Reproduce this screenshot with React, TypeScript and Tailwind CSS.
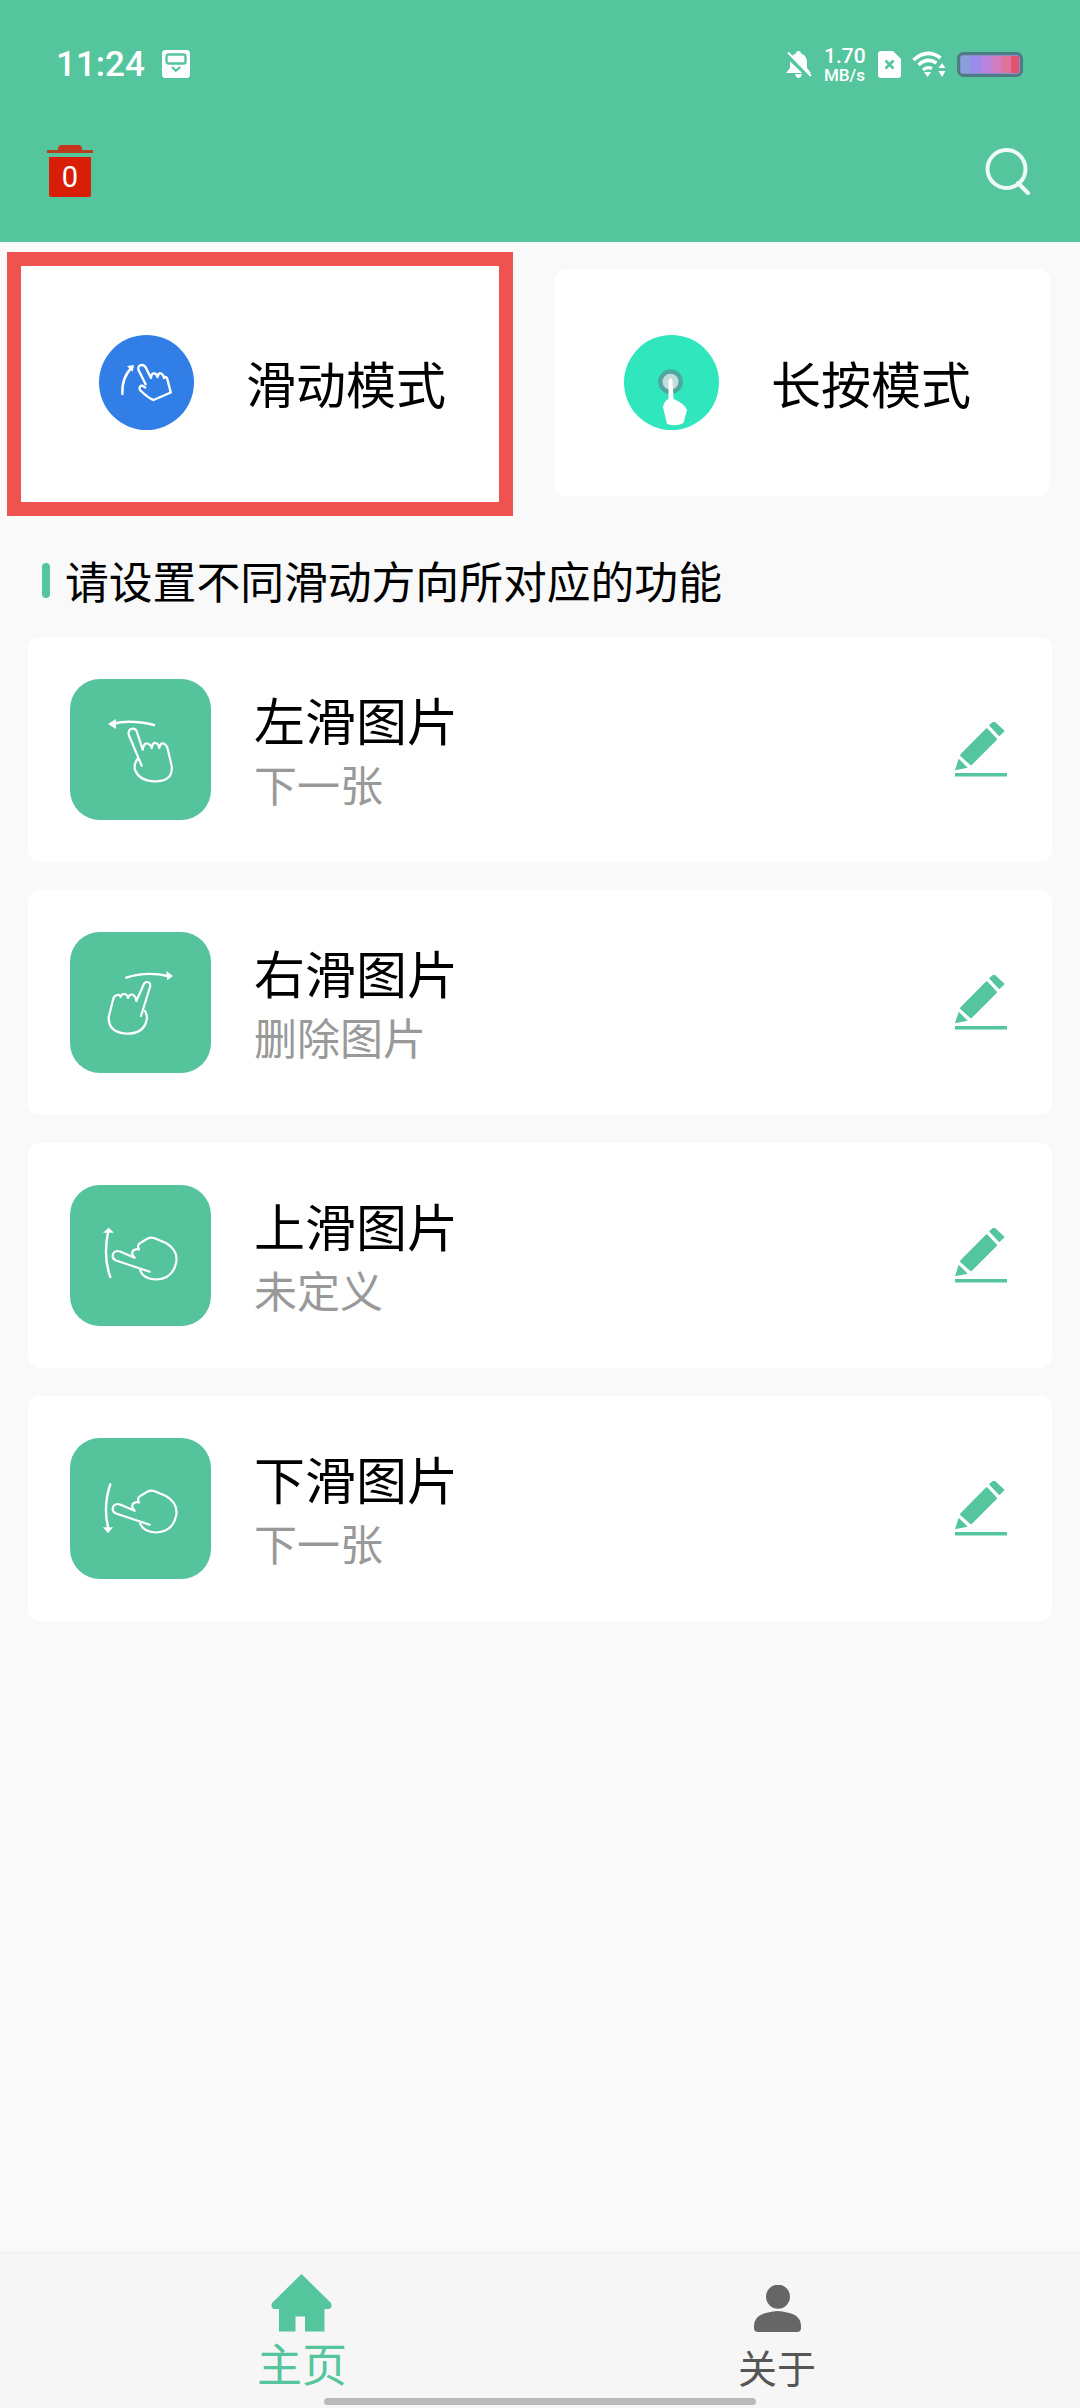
import type { ReactNode } from "react";

const handLeft =
  "M71.7 86.7 L58.7 55.7 Q58 50 62.5 49.7 Q65.5 49.5 66.7 52.3 L72.7 70.7 Q74 64 77 64.5 Q80.5 65 81.7 69 Q82.5 63.5 85.5 64 Q88.5 64.5 89.3 69 Q90.5 63.5 93.5 64.5 Q97 66 97.7 70 L101.7 87 Q103 102 86.7 102.3 Q70 103 65 91 Q63.5 84 68.3 79";
const handRight =
  "M71 84 L80 55 Q81 50 77 50 Q74.5 50 73.5 53 L66.3 69 Q65.5 63 62 62.5 Q59 62.5 58 66 Q57 62 54 62 Q51.5 62 50.5 65 Q49.5 62 47 63 Q43.5 64 43 68 L38.7 85 Q38 100 56 101.7 Q75 102 77 86 Q77 82 75 79";
const handSide =
  "M79.7 86.7 L46 75.5 Q41 73 43.5 68 Q45.5 65 50 66.5 L64.7 72.7 Q60 68 64 65 Q67 63.5 69 64.5 Q66.5 59.5 71 57.5 L76 54.5 Q79 52 84 53 L96 58 Q108 65 106.3 77 Q103 94 86 94.5 Q73 94 70 85";

const rows = [
  {
    title: "左滑图片",
    sub: "下一张",
    hand: handLeft,
    arrow: "M84 46 Q60 40 42 45",
    head: "M38 45 L46 40 L46 50 Z",
  },
  {
    title: "右滑图片",
    sub: "删除图片",
    hand: handRight,
    arrow: "M56.3 45.7 Q76 39 98 44",
    head: "M103 44 L96.3 39 L97.3 48.3 Z",
  },
  {
    title: "上滑图片",
    sub: "未定义",
    hand: handSide,
    arrow: "M40.3 92 Q33 72.7 38 47",
    head: "M38.7 42.7 L33 47.7 L44 47.7 Z",
  },
  {
    title: "下滑图片",
    sub: "下一张",
    hand: handSide,
    arrow: "M40.3 46.3 Q33 68 38 89",
    head: "M38 95.3 L33 89.3 L43 89.3 Z",
  },
];

function PencilIcon() {
  return (
    <svg width="52" height="56" viewBox="0 0 52 56" fill="#55c59d">
      <path d="M0 48.3 L3.7 36.7 L12.7 45.7 Z" />
      <path
        d="M6 33.3 L31.7 7.3 L41 17.3 L16 42.3 Z"
        stroke="#55c59d"
        strokeWidth="2"
        strokeLinejoin="round"
      />
      <path
        d="M35 3.3 L39 0 L48.7 9 L44.3 13.3 Z"
        stroke="#55c59d"
        strokeWidth="1.5"
        strokeLinejoin="round"
      />
      <rect x="0" y="51" width="52" height="3.5" />
    </svg>
  );
}

function SwipeRow({ title, sub, hand, arrow, head }: (typeof rows)[number]) {
  return (
    <div className="flex h-[225px] items-center rounded-xl bg-white pl-[42px] pr-[45px]">
      <div className="h-[141px] w-[141px] shrink-0 rounded-[30px] bg-[#55c39b]">
        <svg width="141" height="141" viewBox="0 0 141 141" fill="none">
          <path d={arrow} stroke="white" strokeWidth="2.4" strokeLinecap="round" />
          <path d={head} fill="white" />
          <path
            d={hand}
            stroke="white"
            strokeWidth="2.2"
            strokeLinecap="round"
            strokeLinejoin="round"
          />
        </svg>
      </div>
      <div className="ml-[43px] flex flex-1 flex-col">
        <span className="text-[51px] leading-[60px] text-black">{title}</span>
        <span className="mt-[6px] text-[43px] leading-[56px] text-[#999999]">{sub}</span>
      </div>
      <PencilIcon />
    </div>
  );
}

function ModeCircle({ className, children }: { className: string; children: ReactNode }) {
  return <div className={`h-[95px] w-[95px] shrink-0 rounded-full ${className}`}>{children}</div>;
}

function StatusBar() {
  return (
    <div className="flex h-[34px] items-center justify-between pl-[56px] pr-[57px]">
      <div className="flex items-center gap-[17px]">
        <span className="font-['Roboto',sans-serif] text-[35px] font-medium leading-none text-white">
          11:24
        </span>
        <svg width="28" height="28" viewBox="0 0 28 28">
          <rect width="28" height="28" rx="3.5" fill="white" />
          <rect x="4.5" y="4.5" width="19" height="9" rx="2" fill="white" stroke="#55c59d" strokeWidth="2.4" />
          <path d="M10 17 L13.8 20.7 L18.3 17" fill="none" stroke="#55c59d" strokeWidth="2.2" />
        </svg>
      </div>
      <div className="flex items-center">
        <svg width="26" height="27" viewBox="0 0 26 27">
          <path d="M12.5 0 Q15 0 15 2.5 Q21 4.5 21 12 L21 17 L25 22 L0 22 L4 17 L4 12 Q4 4.5 10 2.5 Q10 0 12.5 0 Z M9 23 H16 Q15 27 12.5 27 Q10 27 9 23 Z" fill="white" />
          <path d="M0 3 L24 26" stroke="#55c59d" strokeWidth="5" />
          <path d="M2 1.5 L25 25" stroke="white" strokeWidth="2" />
        </svg>
        <div className="ml-[12px] flex w-[44px] flex-col font-['Roboto',sans-serif] font-medium text-white">
          <span className="text-[21px] leading-[21px]">1.70</span>
          <span className="text-[17px] leading-[16px]">MB/s</span>
        </div>
        <svg className="ml-[10px]" width="23" height="27" viewBox="0 0 23 27">
          <path d="M3 0 H15 L23 8 V24 Q23 27 20 27 H3 Q0 27 0 24 V3 Q0 0 3 0 Z" fill="white" />
          <path d="M7.5 9.5 L15.5 17.5 M15.5 9.5 L7.5 17.5" stroke="#55c59d" strokeWidth="2.6" />
        </svg>
        <svg className="ml-[11px]" width="35" height="26" viewBox="0 0 35 26" fill="none">
          <path d="M1.5 9 Q15 -3 28.5 7" stroke="white" strokeWidth="3.6" />
          <path d="M6.5 14 Q15 6 24.5 12" stroke="white" strokeWidth="3.6" />
          <path d="M11 19 Q15 15 20 17.5" stroke="white" strokeWidth="3.2" />
          <path d="M12 21 H19 L15.5 26 Z" fill="white" />
          <path d="M30 12 L33.5 17 H26.5 Z M30 26 L26.5 20 H33.5 Z" fill="white" />
        </svg>
        <svg className="ml-[10px]" width="66" height="25" viewBox="0 0 66 25">
          <rect x="1.5" y="1.5" width="63" height="22" rx="5" fill="#8a8fd0" stroke="#4e7a82" strokeWidth="3" />
          <rect x="4" y="4" width="9" height="17" fill="#8b9fdc" />
          <rect x="13" y="4" width="11" height="17" fill="#9a8cec" />
          <rect x="24" y="4" width="10" height="17" fill="#b884dc" />
          <rect x="34" y="4" width="10" height="17" fill="#d07ec4" />
          <rect x="44" y="4" width="10" height="17" fill="#dc749c" />
          <rect x="54" y="4" width="8" height="17" fill="#e0526e" />
        </svg>
      </div>
    </div>
  );
}

function Toolbar() {
  return (
    <div className="mt-[64px] flex items-start justify-between pl-[47px] pr-[49px]">
      <div className="flex w-[46px] flex-col items-center">
        <div className="h-[5px] w-[24px] rounded-t-[4px] bg-[#c9341c]" />
        <div className="h-[3px] w-[46px] bg-[#b5401f]" />
        <div className="mt-[4px] flex h-[40px] w-[42px] items-center justify-center rounded-b-[2px] bg-[#d81e06] font-['Roboto',sans-serif] text-[29px] leading-none text-white">
          0
        </div>
      </div>
      <svg className="mt-[3px]" width="46" height="47" viewBox="0 0 46 47" fill="none">
        <circle cx="21.5" cy="21" r="19" stroke="#eefaf5" strokeWidth="4" />
        <path d="M33 35 L43 45" stroke="#eefaf5" strokeWidth="4" strokeLinecap="round" />
      </svg>
    </div>
  );
}

export default function App() {
  return (
    <div className="flex h-[2408px] w-[1080px] flex-col overflow-hidden bg-[#f9f9f9] font-['Noto_Sans_CJK_SC','Noto_Sans',sans-serif]">
      <header className="h-[242px] shrink-0 bg-[#55c59d] pt-[47px]">
        <StatusBar />
        <Toolbar />
      </header>

      <main className="flex-1">
        {/* Mode cards */}
        <div className="ml-[7px] mt-[10px] flex items-start gap-[41px]">
          <div className="flex h-[264px] w-[506px] items-center border-[14px] border-[#ee5350] bg-white pl-[78px]">
            <ModeCircle className="mb-[3px] bg-[#317fe6]">
              <svg width="95" height="95" viewBox="0 0 95 95" fill="none">
                <path d="M23.4 59 Q22.5 42 33.5 32" stroke="white" strokeWidth="2.4" strokeLinecap="round" />
                <path d="M34.8 30 L28 31 L33.8 36.7 Z" fill="white" />
                <path
                  d="M47 50 L39.5 35 Q38.5 30.5 42.5 30 Q45.5 29.8 47 33 L52 43 Q52.5 37.5 55.5 38.5 Q58 39 58.5 42 Q59.5 37.5 62 38.5 Q64.5 39.5 65 43 Q66 41 68 43 L71.8 57.5 L54.5 65 Q49 63 41 55 Q39.5 51 43 50.5 L47 53"
                  stroke="white"
                  strokeWidth="2.4"
                  strokeLinejoin="round"
                />
              </svg>
            </ModeCircle>
            <span className="mb-[5px] ml-[52px] text-[50px] leading-none text-black">滑动模式</span>
          </div>
          <div className="mt-[17px] flex h-[227px] w-[496px] items-center rounded-xl bg-white pl-[70px]">
            <ModeCircle className="bg-[#2fe6bd]">
              <svg width="95" height="95" viewBox="0 0 95 95">
                <circle cx="46.5" cy="46.7" r="12.4" fill="#4fa8a0" />
                <circle cx="46.5" cy="46.7" r="8" fill="#c5dcdc" />
                <path
                  d="M44.5 46 Q46.5 40 48.5 46 L49.5 64 Q60 68 63 75 L59.5 88 Q52 92 43 89 L39 72 Q40 66 44.5 64 Z"
                  fill="white"
                />
              </svg>
            </ModeCircle>
            <span className="mb-[2px] ml-[52px] text-[50px] leading-none text-black">长按模式</span>
          </div>
        </div>

        {/* Section title */}
        <div className="ml-[42px] mt-[42px] flex items-center gap-[15px]">
          <div className="h-[35px] w-[8px] rounded-full bg-[#55c59d]" />
          <span className="text-[43.8px] leading-[44px] text-black">请设置不同滑动方向所对应的功能</span>
        </div>

        {/* Swipe rows */}
        <div className="mx-[28px] mt-[35px] flex flex-col gap-[28px]">
          {rows.map((row) => (
            <SwipeRow key={row.title} {...row} />
          ))}
        </div>
      </main>

      {/* Bottom nav */}
      <nav className="relative flex h-[156px] shrink-0 border-t border-[#f0f0f0] bg-[#f6f6f6]">
        <div className="ml-[222px] flex w-[160px] flex-col items-center pt-[21px]">
          <svg width="62" height="58" viewBox="0 0 62 58" fill="#55c59d">
            <path d="M30.5 0 L60 29 Q62 35 56 35 H53.5 V57.5 H34 V42.5 H24.5 V57.5 H8 V35 H5 Q-1 35 1 29 Z" />
          </svg>
          <span className="mt-[6px] text-[45px] leading-[50px] text-[#55c59d]">主页</span>
        </div>
        <div className="ml-[315px] flex w-[160px] flex-col items-center pt-[32px]">
          <svg width="47" height="47" viewBox="0 0 47 47" fill="#666666">
            <ellipse cx="24" cy="11.7" rx="12" ry="12" />
            <path d="M0 41 Q0 30 14 27.5 Q24 24.5 33 27.5 Q47 30 47 41 V43 Q47 47 43 47 H4 Q0 47 0 43 Z" />
          </svg>
          <span className="mt-[11px] text-[39px] leading-[46px] text-[#555555]">关于</span>
        </div>
        <div className="absolute bottom-[3px] left-[324px] h-[7px] w-[432px] rounded-full bg-[#bbbaba]" />
      </nav>
    </div>
  );
}
